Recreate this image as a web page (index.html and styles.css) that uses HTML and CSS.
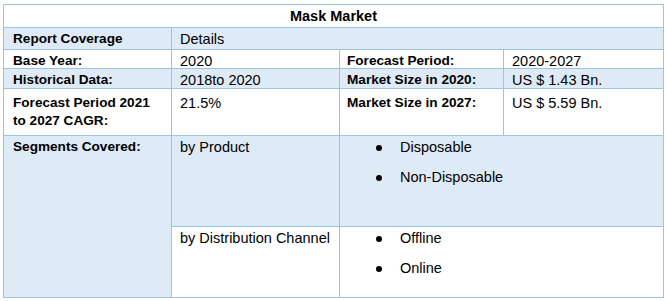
FILE: index.html
```html
<!DOCTYPE html>
<html>
<head>
<meta charset="utf-8">
<link rel="stylesheet" href="styles.css">
</head>
<body>
<div class="page">
  <div class="table">
    <div class="cell title span4">Mask Market</div>

    <div class="cell alt b">Report Coverage</div>
    <div class="cell alt span3">Details</div>

    <div class="cell b">Base Year:</div>
    <div class="cell">2020</div>
    <div class="cell b c3">Forecast Period:</div>
    <div class="cell c4">2020-2027</div>

    <div class="cell alt b">Historical Data:</div>
    <div class="cell alt">2018to 2020</div>
    <div class="cell alt b c3">Market Size in 2020:</div>
    <div class="cell alt c4">US $ 1.43 Bn.</div>

    <div class="cell b tall">Forecast Period 2021<br>to 2027 CAGR:</div>
    <div class="cell tall">21.5%</div>
    <div class="cell b c3 tall">Market Size in 2027:</div>
    <div class="cell c4 tall">US $ 5.59 Bn.</div>

    <div class="cell alt b seg">Segments Covered:</div>
    <div class="cell alt">by Product</div>
    <div class="cell alt span2">
      <ul class="bullets">
        <li>Disposable</li>
        <li>Non-Disposable</li>
      </ul>
    </div>

    <div class="cell">by Distribution Channel</div>
    <div class="cell span2">
      <ul class="bullets">
        <li>Offline</li>
        <li>Online</li>
      </ul>
    </div>
  </div>
</div>
</body>
</html>
```

FILE: styles.css
```css
html, body {
  margin: 0;
  padding: 0;
  background: #ffffff;
}

.page {
  padding: 4px 0 0 3px;
}

.table {
  display: grid;
  grid-template-columns: 168px 168px 164px 160px;
  grid-template-rows: 23px 22px 19px 20px 47px 91px 71px;
  width: 661px;
  box-sizing: border-box;
  border-top: 1px solid #9cc2e5;
  border-left: 1px solid #9cc2e5;
  font-family: "Liberation Sans", Arial, sans-serif;
  font-size: 14.5px;
  line-height: 18px;
  color: #000;
}

.cell {
  box-sizing: border-box;
  border-right: 1px solid #9cc2e5;
  border-bottom: 1px solid #9cc2e5;
  padding: 2px 6px 0 8px;
  background: #ffffff;
  white-space: nowrap;
}

.alt {
  background: #deeaf6;
}

.b {
  font-weight: bold;
  font-size: 13.6px;
  padding-left: 9px;
}

.c3 {
  padding-left: 7px;
}

.c4 {
  padding-left: 8px;
}

.tall {
  padding-top: 5px;
}

.title {
  font-weight: bold;
  font-size: 14.5px;
  text-align: center;
  padding-top: 2px;
  padding-left: 6px;
}

.span4 {
  grid-column: span 4;
}

.span3 {
  grid-column: span 3;
}

.span2 {
  grid-column: span 2;
}

.seg {
  grid-row: span 2;
}

.bullets {
  list-style: none;
  margin: 0;
  padding: 0 0 0 52px;
}

.bullets li {
  position: relative;
  margin-bottom: 12px;
}

.bullets li::before {
  content: "";
  position: absolute;
  left: -24px;
  top: 7px;
  width: 6px;
  height: 6px;
  border-radius: 50%;
  background: #000;
}
```
